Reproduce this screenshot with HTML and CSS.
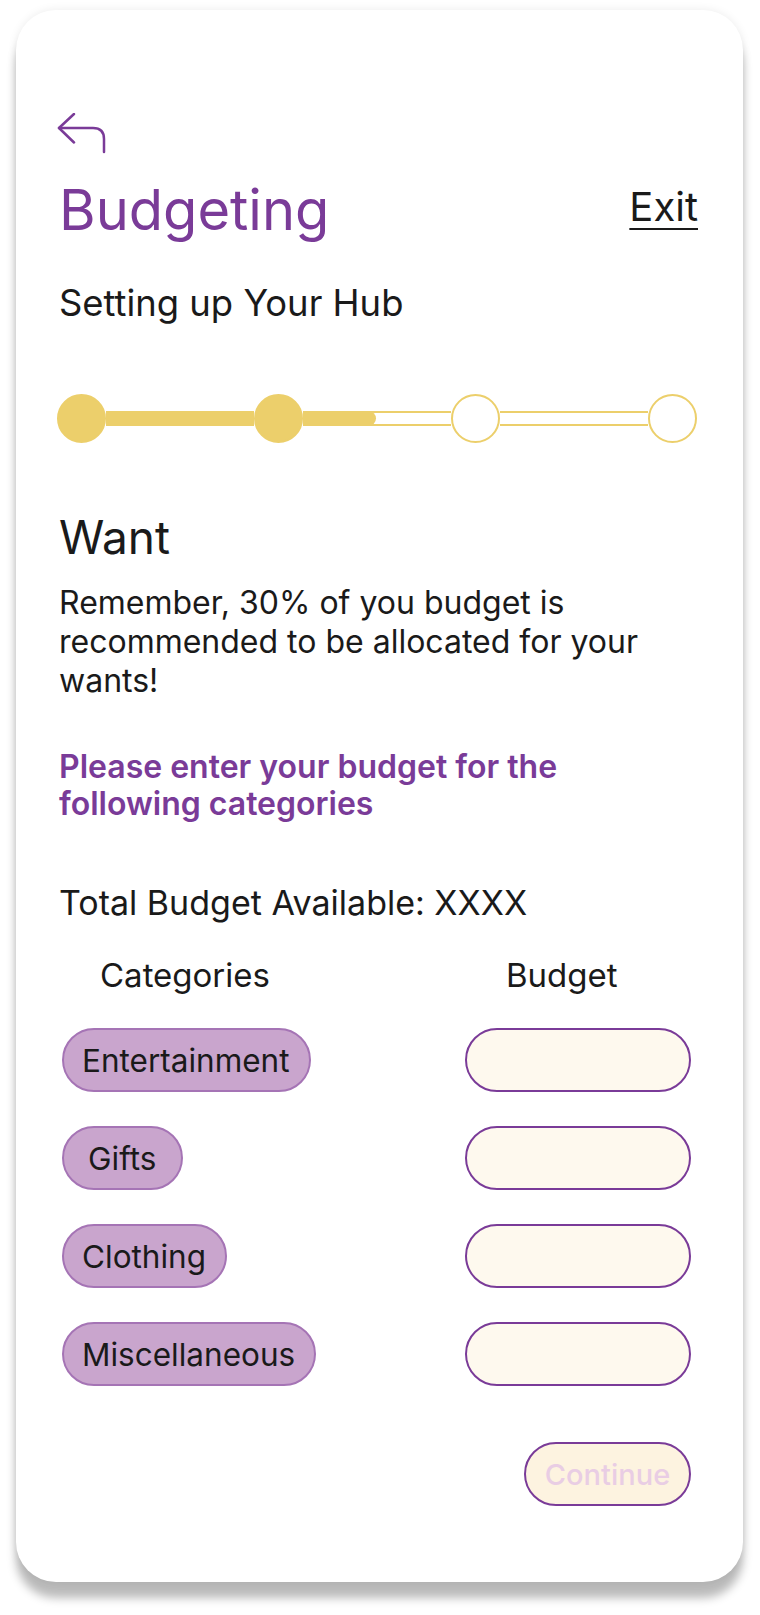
FILE: index.html
```html
<!DOCTYPE html>
<html lang="en">
<head>
<meta charset="utf-8">
<title>Budgeting</title>
<link rel="stylesheet" href="styles.css">
</head>
<body>
<div class="card">
  <div class="back">
    <svg width="52" height="42" viewBox="0 0 52 42" fill="none" stroke="#7a3b98" stroke-width="2.5" stroke-linecap="round" stroke-linejoin="round">
      <path d="M17 1 L2 15 L17 29.5"/>
      <path d="M2 15 H36 Q47 15 47 26 V39"/>
    </svg>
  </div>
  <div class="header">
    <h1 class="title">Budgeting</h1>
    <a class="exit">Exit</a>
  </div>
  <p class="subtitle">Setting up Your Hub</p>

  <div class="progress">
    <span class="dot filled"></span>
    <span class="seg full"></span>
    <span class="dot filled"></span>
    <span class="seg"><span class="seg-fill" style="width:49%"></span></span>
    <span class="dot"></span>
    <span class="seg"></span>
    <span class="dot"></span>
  </div>

  <h2 class="section">Want</h2>
  <p class="note">Remember, 30% of you budget is recommended to be allocated for your wants!</p>
  <p class="prompt">Please enter your budget for the following categories</p>

  <p class="total">Total Budget Available: XXXX</p>

  <div class="cols">
    <span class="col-cat">Categories</span>
    <span class="col-bud">Budget</span>
  </div>

  <div class="rows">
    <div class="row"><span class="pill">Entertainment</span><span class="field"></span></div>
    <div class="row"><span class="pill pill-wide">Gifts</span><span class="field"></span></div>
    <div class="row"><span class="pill">Clothing</span><span class="field"></span></div>
    <div class="row"><span class="pill">Miscellaneous</span><span class="field"></span></div>
  </div>

  <div class="actions">
    <button class="continue">Continue</button>
  </div>
</div>
</body>
</html>
```

FILE: styles.css
```css
* { box-sizing: border-box; }
html, body { margin: 0; padding: 0; background: #ffffff; }
body {
  font-family: Inter, "Noto Sans", sans-serif;
  color: #1a1a1a;
  padding: 10px 0 33px;
  min-height: 1615px;
}
.card {
  width: 727px;
  height: 1572px;
  margin-left: 16px;
  background: #ffffff;
  border-radius: 40px;
  box-shadow: 0 16px 10px rgba(0,0,0,0.27), 0 0 10px rgba(0,0,0,0.08);
  padding: 103px 45px 0 43px;
}
.back svg { display: block; margin-left: -2px; }
.header {
  display: flex;
  justify-content: space-between;
  align-items: flex-start;
  margin-top: 23px;
}
.title {
  margin: 0;
  font-size: 56px;
  line-height: 64px;
  font-weight: 400;
  color: #7a3b98;
}
.exit {
  margin-top: 7px;
  font-size: 40px;
  line-height: 44px;
  color: #1a1a1a;
  text-decoration: underline;
  text-decoration-thickness: 2px;
  text-underline-offset: 7px;
}
.subtitle {
  margin: 39px 0 0;
  font-size: 36.4px;
  line-height: 44px;
}
.progress {
  display: flex;
  align-items: center;
  margin: 69px 0 0 -2px;
  width: 640px;
}
.dot {
  flex: none;
  width: 49px;
  height: 49px;
  border-radius: 50%;
  border: 2px solid #eccf6b;
  background: #ffffff;
}
.dot.filled { background: #eccf6b; }
.seg {
  flex: 1;
  height: 15px;
  border-top: 2px solid #eccf6b;
  border-bottom: 2px solid #eccf6b;
  background: #ffffff;
  display: flex;
}
.seg.full { background: #eccf6b; }
.seg-fill {
  display: block;
  height: 15px;
  margin-top: -2px;
  background: #eccf6b;
  border-radius: 0 8px 8px 0;
}
.section {
  margin: 67px 0 0;
  font-size: 46px;
  line-height: 54px;
  font-weight: 400;
}
.note {
  margin: 19px 0 0;
  font-size: 32px;
  line-height: 39px;
}
.prompt {
  margin: 48px 0 0;
  font-size: 32px;
  line-height: 37px;
  font-weight: 600;
  color: #7a3b98;
}
.total {
  margin: 61px 0 0;
  font-size: 34px;
  line-height: 40px;
}
.cols {
  display: flex;
  margin-top: 32px;
  font-size: 33px;
  line-height: 40px;
}
.col-cat { margin-left: 41px; }
.col-bud { margin-left: 236px; }
.rows {
  display: flex;
  flex-direction: column;
  gap: 34px;
  margin-top: 33px;
}
.row {
  display: flex;
  justify-content: space-between;
  align-items: center;
  padding: 0 7px 0 3px;
}
.pill {
  height: 64px;
  display: flex;
  align-items: center;
  padding: 0 19px 0 18px;
  border-radius: 32px;
  background: #c9a5cd;
  border: 2px solid #a574b5;
  font-size: 31.5px;
}
.pill-wide { padding: 0 25px 0 24px; }
.field {
  width: 226px;
  height: 64px;
  border-radius: 32px;
  background: #fef9ee;
  border: 2.5px solid #7a3b98;
}
.actions {
  display: flex;
  justify-content: flex-end;
  margin-top: 56px;
  padding-right: 7px;
}
.continue {
  width: 167px;
  height: 64px;
  border-radius: 32px;
  background: #fdf3e0;
  border: 2.5px solid #7a3b98;
  font-family: Inter, "Noto Sans", sans-serif;
  font-size: 29px;
  font-weight: 500;
  color: #e9cde4;
  padding: 0;
}
```
